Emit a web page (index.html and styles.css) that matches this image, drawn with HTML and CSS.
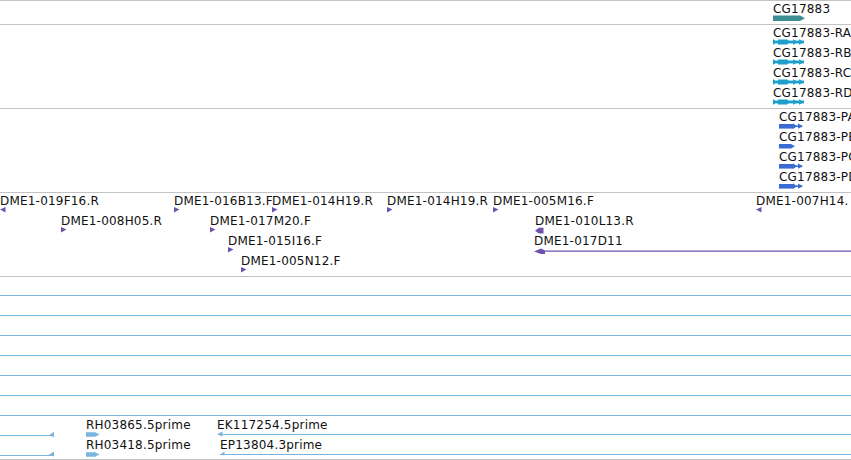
FILE: index.html
```html
<!DOCTYPE html>
<html lang="en">

<head>
    <meta charset="UTF-8">
    <meta name="viewport" content="width=device-width, initial-scale=1.0">
    <title>Tracks</title>
    <link rel="stylesheet" href="styles.css">
</head>

<body>
    <div class="view">
        <!-- gene -->
        <div class="track track-1">
            <div class="row">
                <div class="feat" style="left:773px">
                    <span class="label">CG17883</span>
                    <svg class="glyph gene" width="34" height="6"><polygon points="0,0.5 27,0.5 32,3.2 27,6 0,6" /></svg>
                </div>
            </div>
        </div>

        <!-- transcripts -->
        <div class="track">
            <div class="row">
                <div class="feat" style="left:773px">
                    <span class="label">CG17883-RA</span>
                    <svg class="glyph mrna" width="32" height="6"><use href="#mrna" /></svg>
                </div>
            </div>
            <div class="row">
                <div class="feat" style="left:773px">
                    <span class="label">CG17883-RB</span>
                    <svg class="glyph mrna" width="32" height="6"><use href="#mrna" /></svg>
                </div>
            </div>
            <div class="row">
                <div class="feat" style="left:773px">
                    <span class="label">CG17883-RC</span>
                    <svg class="glyph mrna" width="32" height="6"><use href="#mrna" /></svg>
                </div>
            </div>
            <div class="row">
                <div class="feat" style="left:773px">
                    <span class="label">CG17883-RD</span>
                    <svg class="glyph mrna" width="32" height="6"><use href="#mrna" /></svg>
                </div>
            </div>
        </div>

        <!-- proteins -->
        <div class="track">
            <div class="row">
                <div class="feat" style="left:779px">
                    <span class="label">CG17883-PA</span>
                    <svg class="glyph prot" width="25" height="6"><use href="#prot" /></svg>
                </div>
            </div>
            <div class="row">
                <div class="feat" style="left:779px">
                    <span class="label">CG17883-PB</span>
                    <svg class="glyph prot" width="18" height="6"><polygon points="0,1 12,1 16,3.3 12,5.6 0,5.6" /></svg>
                </div>
            </div>
            <div class="row">
                <div class="feat" style="left:779px">
                    <span class="label">CG17883-PC</span>
                    <svg class="glyph prot" width="25" height="6"><use href="#prot" /></svg>
                </div>
            </div>
            <div class="row">
                <div class="feat" style="left:779px">
                    <span class="label">CG17883-PD</span>
                    <svg class="glyph prot" width="25" height="6"><use href="#prot" /></svg>
                </div>
            </div>
        </div>

        <!-- BAC ends -->
        <div class="track">
            <div class="row">
                <div class="feat" style="left:0px">
                    <span class="label">DME1-019F16.R</span>
                    <svg class="glyph bac" width="6" height="6"><use href="#left" /></svg>
                </div>
                <div class="feat" style="left:174px">
                    <span class="label">DME1-016B13.F</span>
                    <svg class="glyph bac" width="6" height="6"><use href="#right" /></svg>
                </div>
                <div class="feat" style="left:272px">
                    <span class="label">DME1-014H19.R</span>
                    <svg class="glyph bac" width="6" height="6"><use href="#right" /></svg>
                </div>
                <div class="feat" style="left:387px">
                    <span class="label">DME1-014H19.R</span>
                    <svg class="glyph bac" width="6" height="6"><use href="#right" /></svg>
                </div>
                <div class="feat" style="left:493px">
                    <span class="label">DME1-005M16.F</span>
                    <svg class="glyph bac" width="6" height="6"><use href="#right" /></svg>
                </div>
                <div class="feat" style="left:756px">
                    <span class="label">DME1-007H14.</span>
                    <svg class="glyph bac" width="6" height="6"><use href="#left" /></svg>
                </div>
            </div>
            <div class="row">
                <div class="feat" style="left:61px">
                    <span class="label">DME1-008H05.R</span>
                    <svg class="glyph bac" width="6" height="6"><use href="#right" /></svg>
                </div>
                <div class="feat" style="left:210px">
                    <span class="label">DME1-017M20.F</span>
                    <svg class="glyph bac" width="6" height="6"><use href="#right" /></svg>
                </div>
                <div class="feat" style="left:535px">
                    <span class="label">DME1-010L13.R</span>
                    <svg class="glyph bac" width="9" height="6"><polygon points="0,3.8 4,0.8 8.5,0.8 8.5,6.6 4,6.6" /></svg>
                </div>
            </div>
            <div class="row">
                <div class="feat" style="left:228px">
                    <span class="label">DME1-015I16.F</span>
                    <svg class="glyph bac" width="6" height="6"><use href="#right" /></svg>
                </div>
                <div class="feat" style="left:534px">
                    <span class="label">DME1-017D11</span>
                    <svg class="glyph bac" width="317" height="6"><polygon points="0,4.4 7,1.4 11,3.6 317,3.6 317,4.8 11,4.8 11,6.9 7,6.9" /></svg>
                </div>
            </div>
            <div class="row">
                <div class="feat" style="left:241px">
                    <span class="label">DME1-005N12.F</span>
                    <svg class="glyph bac" width="6" height="6"><use href="#right" /></svg>
                </div>
            </div>
        </div>

        <!-- ESTs -->
        <div class="track track-est">
            <div class="row"><div class="feat nolabel" style="left:0px"><svg class="glyph est" width="851" height="6"><rect class="line" x="0" y="4" width="851" height="1" /></svg></div></div>
            <div class="row"><div class="feat nolabel" style="left:0px"><svg class="glyph est" width="851" height="6"><rect class="line" x="0" y="4" width="851" height="1" /></svg></div></div>
            <div class="row"><div class="feat nolabel" style="left:0px"><svg class="glyph est" width="851" height="6"><rect class="line" x="0" y="4" width="851" height="1" /></svg></div></div>
            <div class="row"><div class="feat nolabel" style="left:0px"><svg class="glyph est" width="851" height="6"><rect class="line" x="0" y="4" width="851" height="1" /></svg></div></div>
            <div class="row"><div class="feat nolabel" style="left:0px"><svg class="glyph est" width="851" height="6"><rect class="line" x="0" y="4" width="851" height="1" /></svg></div></div>
            <div class="row"><div class="feat nolabel" style="left:0px"><svg class="glyph est" width="851" height="6"><rect class="line" x="0" y="4" width="851" height="1" /></svg></div></div>
            <div class="row"><div class="feat nolabel" style="left:0px"><svg class="glyph est" width="851" height="6"><rect class="line" x="0" y="4" width="851" height="1" /></svg></div></div>
            <div class="row">
                <div class="feat nolabel" style="left:0px">
                    <svg class="glyph est" width="56" height="6"><rect class="line" x="0" y="4" width="54" height="1" /><polygon points="48.5,4.5 54,0.8 54,6" /></svg>
                </div>
                <div class="feat" style="left:86px">
                    <span class="label">RH03865.5prime</span>
                    <svg class="glyph est" width="14" height="6"><use href="#est" /></svg>
                </div>
                <div class="feat" style="left:217px">
                    <span class="label">EK117254.5prime</span>
                    <svg class="glyph est" width="634" height="6"><rect class="line" x="4" y="3" width="630" height="1" /><polygon points="0,3.2 5.5,0.5 5.5,5.5" /></svg>
                </div>
            </div>
            <div class="row">
                <div class="feat nolabel" style="left:0px">
                    <svg class="glyph est" width="56" height="6"><rect class="line" x="0" y="4" width="54" height="1" /><polygon points="48.5,4 54,0.5 54,5.6" /></svg>
                </div>
                <div class="feat" style="left:86px">
                    <span class="label">RH03418.5prime</span>
                    <svg class="glyph est" width="14" height="6"><use href="#est" /></svg>
                </div>
                <div class="feat" style="left:220px">
                    <span class="label">EP13804.3prime</span>
                    <svg class="glyph est" width="631" height="6"><rect class="line" x="0" y="3" width="631" height="1" /><polygon points="0,3.8 4.5,0.6 4.5,4.2" /></svg>
                </div>
            </div>
        </div>

        <div class="track"></div>
    </div>

    <svg class="defs" width="0" height="0">
        <defs>
            <g id="mrna">
                <rect x="3" y="1.6" width="28" height="2.8" />
                <polygon points="0,0.2 5,3 0,5.8" />
                <rect x="5" y="0.5" width="8" height="5" />
                <polygon points="13,0 17.5,3 13,6" />
                <polygon points="20,0.2 25,3 20,5.8" />
                <polygon points="26,0.2 31,3 26,5.8" />
            </g>
            <g id="prot">
                <rect x="0" y="1" width="14" height="4.6" />
                <polygon points="14,0.2 18,3.2 14,6" />
                <rect x="17" y="2.4" width="6" height="1.6" />
                <polygon points="19,0.5 24,3.2 19,5.8" />
            </g>
            <polygon id="right" points="0,0 5.5,2.4 0,5.5" />
            <polygon id="left" points="5.5,0 0,2.4 5.5,5.5" />
            <polygon id="est" points="0,1.3 9,1.3 13.5,3.5 9,5.7 0,5.7" />
        </defs>
    </svg>
</body>

</html>
```

FILE: styles.css
```css
* {
    margin: 0;
    padding: 0;
}

body {
    background: #fff;
    overflow: hidden;
}

.view {
    width: 851px;
    height: 460px;
    overflow: hidden;
}

.track {
    border-top: 1px solid #c3c3c3;
    padding-bottom: 3px;
}

.track-est {
    padding-bottom: 2px;
}

.row {
    position: relative;
    height: 20px;
}

.feat {
    position: absolute;
    top: 0;
}

.label {
    display: block;
    margin-top: 1px;
    height: 14px;
    font: 12px/14px "DejaVu Sans", sans-serif;
    letter-spacing: 0.2px;
    color: #111;
    white-space: nowrap;
}

.glyph {
    display: block;
    margin-top: -1px;
    overflow: visible;
}

.nolabel .glyph {
    margin-top: 14px;
}

.line {
    shape-rendering: crispEdges;
}

.gene {
    fill: #3b8e91;
}

.mrna {
    fill: #1c9fca;
}

.prot {
    fill: #3a6bd2;
}

.bac {
    fill: #6f52ad;
}

.est {
    fill: #7ab4e0;
}

.defs {
    position: absolute;
}
```
